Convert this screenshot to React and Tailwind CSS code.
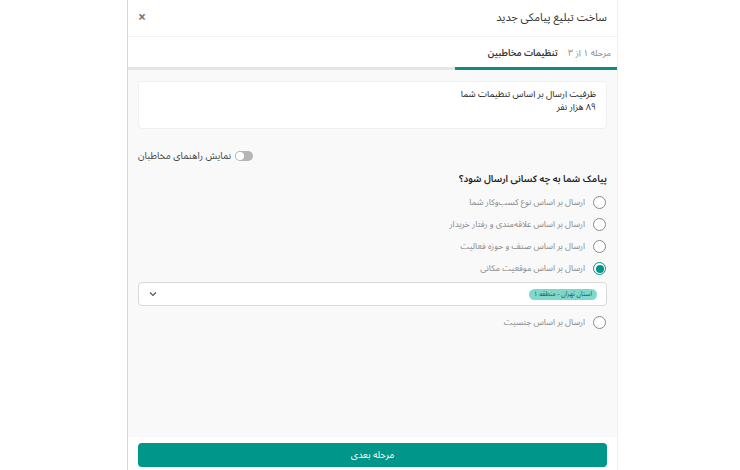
import React, { useState } from "react";

const options = [
  { id: 1, label: "ارسال بر اساس نوع کسب‌وکار شما" },
  { id: 2, label: "ارسال بر اساس علاقه‌مندی و رفتار خریدار" },
  { id: 3, label: "ارسال بر اساس صنف و حوزه فعالیت" },
  { id: 4, label: "ارسال بر اساس موقعیت مکانی" },
];

const Radio = ({ checked, onClick }) => (
  <button
    onClick={onClick}
    className={`w-[13px] h-[13px] rounded-full border flex items-center justify-center bg-white ${
      checked ? "border-[#00968a]" : "border-[#8a8a8a]"
    }`}
  >
    {checked && <span className="w-[8px] h-[8px] rounded-full bg-[#00968a]"></span>}
  </button>
);

const App = () => {
  const [selected, setSelected] = useState(4);
  const [showGuide, setShowGuide] = useState(false);

  return (
    <div className="w-[740px] h-[470px] bg-white overflow-hidden pl-[127px]" style={{ fontFamily: '"Noto Sans Arabic", "DejaVu Sans", sans-serif' }}>
      <div dir="rtl" className="w-[491px] h-[470px] border-l border-r border-l-[#d6d6d6] border-r-[#f0f0f0] flex flex-col">
        {/* هدر */}
        <div className="h-[37px] shrink-0 flex items-center justify-between pr-[10px] pl-[10px] border-b border-[#f2f2f2]">
          <h1 className="text-[11px] text-[#333]">ساخت تبلیغ پیامکی جدید</h1>
          <span className="text-[14px] text-[#777] leading-none font-bold">×</span>
        </div>

        {/* مراحل */}
        <div className="h-[33px] shrink-0 flex items-center pr-[6px] relative">
          <span className="text-[9px] text-[#888]">مرحله ۱ از ۳</span>
          <span className="text-[9px] font-semibold text-[#333] mr-[10px]">تنظیمات مخاطبین</span>
          <div className="absolute bottom-0 right-0 left-0 h-[3px] bg-[#e6e6e6]"></div>
          <div className="absolute bottom-0 right-0 w-[162px] h-[3px] bg-[#138a80]"></div>
        </div>

        {/* بدنه */}
        <div className="flex-1 bg-[#f9f9f9] pr-[10px] pl-[10px] pt-[11px]">
          <div className="h-[48px] bg-white rounded-[4px] border border-[#f0f0f0] pr-[10px] pt-[6px]">
            <p className="text-[9px] text-[#222] leading-[13px]">
              ظرفیت ارسال بر اساس تنظیمات شما
              <br />
              ۸۹ هزار نفر
            </p>
          </div>

          <div className="flex justify-end items-center mt-[20px] h-[14px]">
            <button
              onClick={() => setShowGuide(!showGuide)}
              className="w-[18px] h-[10px] rounded-full bg-[#b5b5b5] relative"
            >
              <span className={`absolute top-[1px] w-[8px] h-[8px] rounded-full bg-white ${showGuide ? "right-[1px]" : "left-[1px]"}`}></span>
            </button>
            <span className="text-[9.5px] text-[#444] mr-[4px]">نمایش راهنمای مخاطبان</span>
          </div>

          <h2 className="text-[9.5px] font-semibold text-[#222] mt-[9px]">پیامک شما به چه کسانی ارسال شود؟</h2>

          <div className="mt-[10px] flex flex-col gap-[9px] pr-[1px]">
            {options.map((o) => (
              <div key={o.id} className="flex items-center h-[13px]">
                <Radio checked={selected === o.id} onClick={() => setSelected(o.id)} />
                <span className="text-[8.5px] text-[#888] mr-[8px]">{o.label}</span>
              </div>
            ))}
          </div>

          <div className="mt-[7px] h-[24px] bg-white border border-[#d9d9d9] rounded-[4px] flex items-center justify-between pr-[9px] pl-[10px]">
            <span className="bg-[#7fd8cc] text-[#0e5a52] text-[6.5px] rounded-full px-[5px] h-[11px] leading-[11px]">استان تهران - منطقه ۱</span>
            <svg width="8" height="6" viewBox="0 0 8 6" fill="none">
              <path d="M1 1.5L4 4.5L7 1.5" stroke="#555" strokeWidth="1.2" />
            </svg>
          </div>

          <div className="mt-[10px] flex items-center h-[13px] pr-[1px]">
            <Radio checked={selected === 5} onClick={() => setSelected(5)} />
            <span className="text-[8.5px] text-[#888] mr-[8px]">ارسال بر اساس جنسیت</span>
          </div>
        </div>

        {/* فوتر */}
        <div className="h-[33px] shrink-0 bg-white pr-[10px] pl-[10px] pt-[4px]">
          <button className="w-full h-[24px] bg-[#00968a] rounded-[4px] text-white text-[9.5px]">مرحله بعدی</button>
        </div>
      </div>
    </div>
  );
};

export default App;
